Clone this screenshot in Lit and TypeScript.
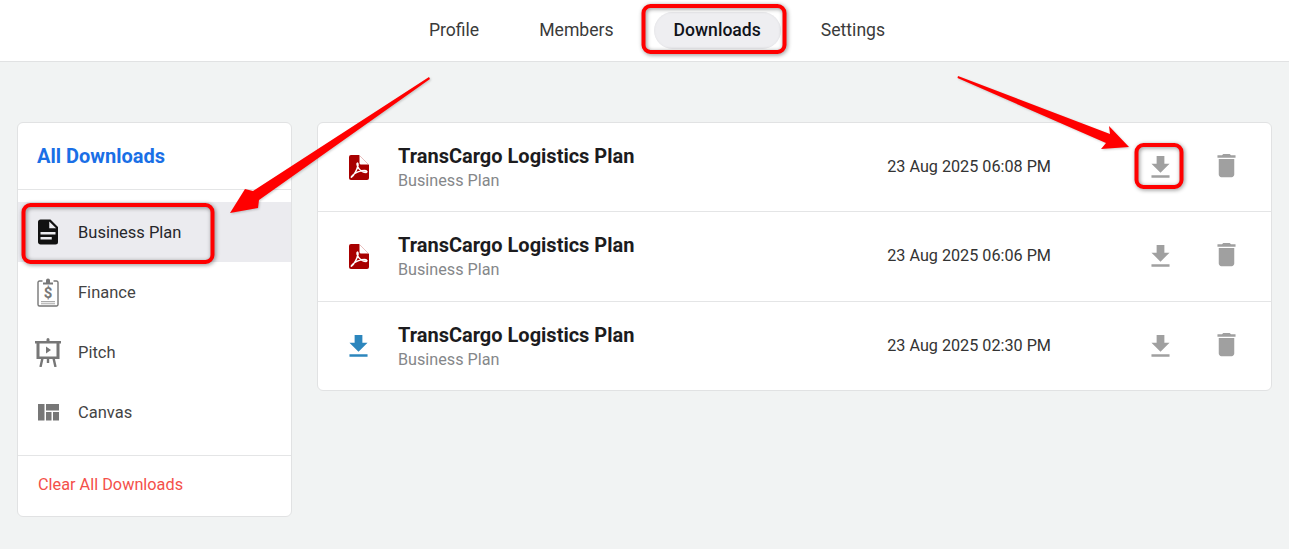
import { LitElement, html, css, svg } from "lit";
import { customElement } from "lit/decorators.js";

const downloadIcon = (cls: string) => html`<svg class="ic31 ${cls}" viewBox="0 0 24 24"><path d="M5 20h14v-2H5v2zM19 9h-4V3H9v6H5l7 7 7-7z"/></svg>`;
const trashIcon = html`<svg class="ic31 grey trash" viewBox="0 0 24 24"><path d="M6 19c0 1.1.9 2 2 2h8c1.1 0 2-.9 2-2V7H6v12zM19 4h-3.5l-1-1h-5l-1 1H5v2h14V4z"/></svg>`;
const pdfIcon = html`<svg class="pdf" viewBox="0 0 20 25">
  <path fill="#a80000" d="M2 0H10L20 10V23a2 2 0 0 1-2 2H2a2 2 0 0 1-2-2V2a2 2 0 0 1 2-2z"/>
  <path fill="#fff" d="M10.500 .5L19.500 9.500H12a1.500 1.500 0 0 1-1.500-1.500z"/>
  <path fill="none" stroke="#fff" stroke-width="1.500" d="M2.500 22C5 20.500 8 15 9 10.500C9.300 8 8.300 7.500 8 9C8 12 11.500 17.500 17 17.500C18.800 17 17.800 15.500 15.500 15.500C11.500 15.500 6 17.500 3.500 20.500C2.500 21.500 2 22.500 2.500 22z"/>
</svg>`;

const fileIcon = html`<svg class="side" viewBox="0 0 24 24"><path fill="#111" d="M13,9H18.500L13,3.500V9M6,2H14L20,8V20A2,2 0 0,1 18,22H6C4.890,22 4,21.100 4,20V4C4,2.890 4.890,2 6,2M15,18V16H6V18H15M18,14V12H6V14H18Z"/></svg>`;
const financeIcon = html`<svg class="side" viewBox="0 0 30 30">
  <path fill="none" stroke="#777" stroke-width="1.400" d="M9.500 4H6.500A1.500 1.500 0 0 0 5 5.500V27.500A1.500 1.500 0 0 0 6.500 29H23.500A1.500 1.500 0 0 0 25 27.500V5.500A1.500 1.500 0 0 0 23.500 4H20.500"/>
  <path fill="#777" d="M10 5.500H13V3.500a2 2 0 0 1 4 0V5.500H20V7.500H10z"/>
  <path fill="#aaa" d="M8 24h14v1.300H8zM8 26.200h14v1H8z"/>
  <text x="15" y="21" text-anchor="middle" class="dollar">$</text>
</svg>`;
const pitchIcon = html`<svg class="side" viewBox="0 0 30 30">
  <path fill="#777" d="M2 4H13.500V2.500a1.500 1.500 0 0 1 3 0V4H28V6.500H26.500V22H3.500V6.500H2zM6.500 6.500V19.500H23.500V6.500z"/>
  <path fill="#777" d="M13 9.500L18 13L13 16.500z"/>
  <path fill="none" stroke="#777" stroke-width="2.400" d="M9.500 21L7.500 30M20.500 21L22.500 30M15 21V26"/>
</svg>`;
const canvasIcon = html`<svg class="side" viewBox="0 0 30 30">
  <path fill="#777" d="M5 7H11.500V23.500H5zM13 7H26V13.500H13zM13 15H18.500V23.500H13zM20 15H26V23.500H20z"/>
</svg>`;

@customElement("app-root")
export class AppRoot extends LitElement {
  static styles = css`
    :host { display: block; position: relative; min-height: 549px; background: #f1f3f3; font-family: Roboto, "Liberation Sans", sans-serif; overflow: hidden; }
    .top { height: 61px; background: #fff; border-bottom: 1px solid #e1e2e3; display: flex; justify-content: center; align-items: center; gap: 20px; padding-left: 25px; }
    .tab { font-size: 17.600px; color: #3a3a3a; padding: 0 20px; height: 37px; line-height: 37px; border-radius: 19px; }
    .tab.on { font-weight: 500; color: #10131a; background: #eeeef1; box-shadow: inset 0 0 3px rgba(0,0,0,.06); }
    .page { display: flex; gap: 25px; padding: 60px 17px 0; align-items: flex-start; }
    .card { background: #fff; border: 1px solid #e1e2e3; border-radius: 6px; box-sizing: border-box; }
    .sidebar { width: 275px; height: 395px; flex: none; display: flex; flex-direction: column; }
    .head { height: 66px; border-bottom: 1px solid #e4e5e6; display: flex; align-items: center; padding-left: 19px; font-size: 20px; font-weight: 700; color: #1a6fe6; }
    .menu { padding-top: 12px; height: 266px; box-sizing: border-box; border-bottom: 1px solid #e4e5e6; }
    .item { height: 60px; display: flex; align-items: center; gap: 15px; padding-left: 15px; font-size: 16.500px; color: #444; }
    .item.on { background: #ebebef; color: #26272b; }
    .clear { flex: 1; display: flex; align-items: center; padding: 0 0 4px 20px; font-size: 16.300px; color: #f4504a; }
    .side { width: 30px; height: 30px; flex: none; display: block; }
    .dollar { font: 700 15px Roboto, sans-serif; fill: #777; }
    .list { width: 955px; flex: none; height: 269px; }
    .row { height: 89px; box-sizing: border-box; border-bottom: 1px solid #e4e5e6; display: flex; align-items: center; padding-left: 26px; padding-right: 29px; }
    .row:nth-child(2) { height: 90px; }
    .row:last-child { border-bottom: none; height: 88px; }
    .fileic { width: 30px; flex: none; display: flex; justify-content: center; margin-right: 24px; }
    .shift { margin-left: -2px; }
    .info { flex: 1; line-height: 24px; padding-top: 2px; }
    .title { font-size: 20px; font-weight: 700; color: #1c1c1e; }
    .sub { font-size: 16.200px; color: #85878a; margin-top: 1px; }
    .date { font-size: 16.200px; color: #333; margin-right: 94px; margin-bottom: 2px; }
    .ic31 { width: 31px; height: 31px; display: block; flex: none; }
    .trash { margin-bottom: 4px; }
    .grey { fill: #a0a0a0; }
    .blue { fill: #2c86bd; }
    .gap { margin-right: 35px; }
    .pdf { width: 20px; height: 25px; display: block; }
    .overlay { position: absolute; left: 0; top: 0; width: 1289px; height: 549px; pointer-events: none; }
    .box { fill: none; stroke: #f00; stroke-width: 4px; filter: drop-shadow(1px 1px 2px rgba(0,0,0,.45)); }
    .arrow { fill: #f00; filter: drop-shadow(1px 1px 1px rgba(0,0,0,.2)); }
  `;

  private row(date: string, icon: unknown) {
    return html`<div class="row">
      <div class="fileic">${icon}</div>
      <div class="info"><div class="title">TransCargo Logistics Plan</div><div class="sub">Business Plan</div></div>
      <div class="date">${date}</div>
      <span class="gap">${downloadIcon("grey")}</span>
      ${trashIcon}
    </div>`;
  }

  render() {
    return html`
      <div class="top">
        <div class="tab">Profile</div>
        <div class="tab">Members</div>
        <div class="tab on">Downloads</div>
        <div class="tab">Settings</div>
      </div>
      <div class="page">
        <div class="card sidebar">
          <div class="head">All Downloads</div>
          <div class="menu">
            <div class="item on">${fileIcon}Business Plan</div>
            <div class="item">${financeIcon}Finance</div>
            <div class="item">${pitchIcon}Pitch</div>
            <div class="item">${canvasIcon}Canvas</div>
          </div>
          <div class="clear">Clear All Downloads</div>
        </div>
        <div class="card list">
          ${this.row("23 Aug 2025 06:08 PM", pdfIcon)}
          ${this.row("23 Aug 2025 06:06 PM", pdfIcon)}
          ${this.row("23 Aug 2025 02:30 PM", html`<span class="shift">${downloadIcon("blue")}</span>`)}
        </div>
      </div>
      <svg class="overlay" viewBox="0 0 1289 549">
        ${svg`
          <rect class="box" x="643.5" y="6" width="141" height="46" rx="7"/>
          <rect class="box" x="23.5" y="205" width="189" height="57" rx="7"/>
          <rect class="box" x="1136.5" y="145" width="45" height="42" rx="7"/>
          <polygon class="arrow" points="429,77 430,79 259,200 258,208 230,213 245,189 253,191"/>
          <polygon class="arrow" points="958,76 957.500,78 1106,143 1101,149 1129,147 1109,126 1110,134"/>
        `}
      </svg>
    `;
  }
}
